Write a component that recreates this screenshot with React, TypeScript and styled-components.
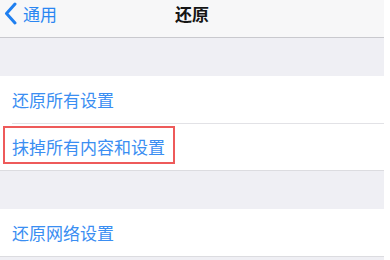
import React from 'react'
import styled, { createGlobalStyle } from 'styled-components'

const GlobalStyle = createGlobalStyle`
    html, body {
        margin: 0;
        padding: 0;
        background: #ffffff;
    }
    body {
        font-family: "Noto Sans CJK SC", "Noto Sans", sans-serif;
    }
`

const Page = styled.div`
    width: 384px;
    height: 260px;
    background: #efeff4;
    overflow: hidden;
`

const NavBar = styled.header`
    display: grid;
    grid-template-columns: 1fr auto 1fr;
    align-items: center;
    height: 38px;
    padding-bottom: 10px;
    box-sizing: border-box;
    background: #f7f7f8;
    border-bottom: 1px solid #c9c9ce;
`

const Back = styled.div`
    display: flex;
    align-items: center;
    gap: 6px;
    padding-left: 4px;
    color: #2a86f2;
    font-size: 17px;
    line-height: 20px;
`

const Title = styled.h1`
    margin: 0;
    font-size: 17px;
    font-weight: 600;
    line-height: 20px;
    color: #151515;
`

const Gap = styled.div`
    height: 38px;
`

const Group = styled.section`
    background: #ffffff;
    border-bottom: 1px solid #dcdce0;
`

const Cell = styled.div`
    padding-left: 12px;
`

const CellBody = styled.div<{ $divider?: boolean; $height: number }>`
    display: flex;
    align-items: center;
    height: ${p => p.$height}px;
    border-top: ${p => (p.$divider ? '1px solid #e2e2e6' : 'none')};
`

const Label = styled.span`
    font-size: 17px;
    line-height: 24px;
    color: #3a8ef2;
`

const Highlight = styled.span`
    position: relative;

    &::after {
        content: '';
        position: absolute;
        left: -9px;
        right: -10px;
        top: -9px;
        bottom: -5px;
        border: 2px solid #ee5a5a;
        pointer-events: none;
    }
`

const Chevron = () => (
    <svg width="13" height="23" viewBox="0 0 13 23" fill="none">
        <polyline
            points="11,2 2.5,11.5 11,21"
            stroke="#1f7ff0"
            strokeWidth="3"
            strokeLinecap="round"
            strokeLinejoin="round"
        />
    </svg>
)

export default function App() {
    return (
        <>
            <GlobalStyle />
            <Page>
                <NavBar>
                    <Back>
                        <Chevron />
                        <span>通用</span>
                    </Back>
                    <Title>还原</Title>
                    <div />
                </NavBar>
                <Gap />
                <Group>
                    <Cell>
                        <CellBody $height={47}>
                            <Label>还原所有设置</Label>
                        </CellBody>
                    </Cell>
                    <Cell>
                        <CellBody $divider $height={46}>
                            <Highlight>
                                <Label>抹掉所有内容和设置</Label>
                            </Highlight>
                        </CellBody>
                    </Cell>
                </Group>
                <Gap />
                <Group>
                    <Cell>
                        <CellBody $height={47}>
                            <Label>还原网络设置</Label>
                        </CellBody>
                    </Cell>
                </Group>
            </Page>
        </>
    )
}
